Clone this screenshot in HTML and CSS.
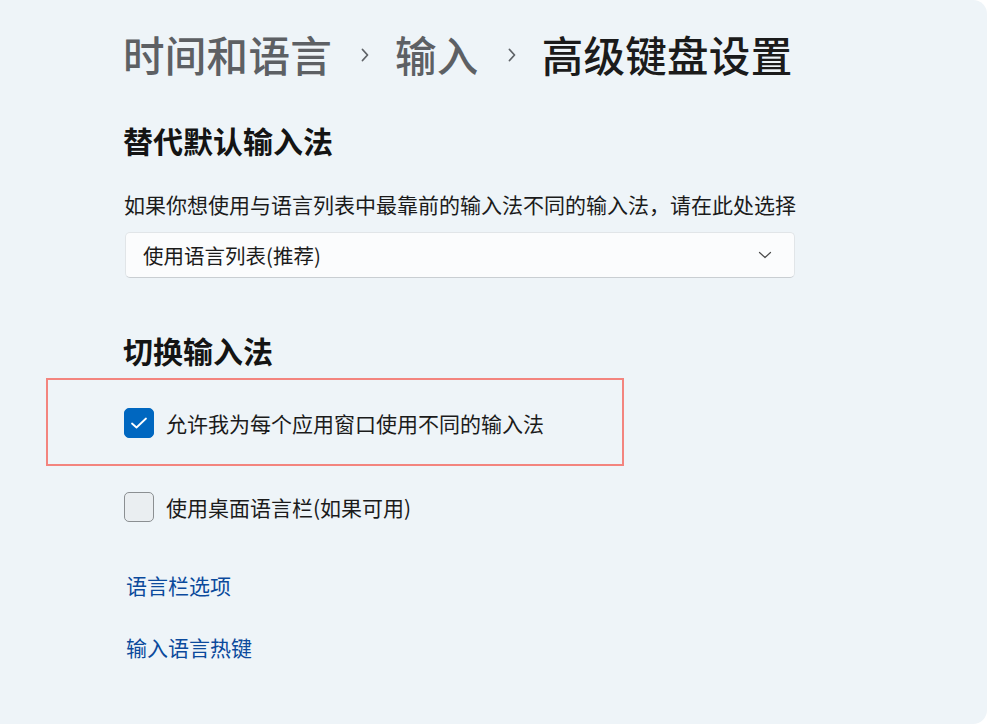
FILE: index.html
```html
<!DOCTYPE html>
<html lang="zh-CN">
<head>
<meta charset="utf-8">
<title>高级键盘设置</title>
<link rel="stylesheet" href="styles.css">
</head>
<body>
<div class="window">
  <nav class="crumbs">
    <span class="crumb">时间和语言</span>
    <svg class="sep" width="12" height="16" viewBox="0 0 12 16"><path d="M3.5 2.5 L8.5 8 L3.5 13.5" fill="none" stroke="#5f6368" stroke-width="1.8" stroke-linecap="round" stroke-linejoin="round"/></svg>
    <span class="crumb">输入</span>
    <svg class="sep" width="12" height="16" viewBox="0 0 12 16"><path d="M3.5 2.5 L8.5 8 L3.5 13.5" fill="none" stroke="#5f6368" stroke-width="1.8" stroke-linecap="round" stroke-linejoin="round"/></svg>
    <span class="crumb current">高级键盘设置</span>
  </nav>

  <h2 class="section-title first">替代默认输入法</h2>
  <p class="desc">如果你想使用与语言列表中最靠前的输入法不同的输入法，请在此处选择</p>
  <div class="select">
    <span>使用语言列表(推荐)</span>
    <svg width="14" height="8" viewBox="0 0 14 8"><path d="M1.5 1.5 L7 6.5 L12.5 1.5" fill="none" stroke="#4a4a4a" stroke-width="1.2" stroke-linecap="round" stroke-linejoin="round"/></svg>
  </div>

  <h2 class="section-title second">切换输入法</h2>
  <label class="check-row row-one">
    <span class="box checked">
      <svg width="18" height="14" viewBox="0 0 18 14"><path d="M2 7.5 L6.5 11.5 L16 2.5" fill="none" stroke="#fff" stroke-width="1.8" stroke-linecap="round" stroke-linejoin="round"/></svg>
    </span>
    <span>允许我为每个应用窗口使用不同的输入法</span>
  </label>
  <label class="check-row row-two">
    <span class="box"></span>
    <span>使用桌面语言栏(如果可用)</span>
  </label>

  <a class="link link-one" href="#">语言栏选项</a>
  <a class="link link-two" href="#">输入语言热键</a>

  <div class="highlight"></div>
</div>
</body>
</html>
```

FILE: styles.css
```css
html, body {
  margin: 0;
  padding: 0;
  background: #ffffff;
}

body {
  font-family: "Noto Sans CJK SC", "Noto Sans", sans-serif;
  color: #1b1b1b;
}

.window {
  position: relative;
  box-sizing: border-box;
  width: 987px;
  height: 724px;
  background: #eef4f8;
  border-radius: 0 14px 14px 0;
  padding: 26px 0 0 123px;
  overflow: hidden;
}

.crumbs {
  display: flex;
  align-items: center;
  height: 56px;
}

.crumb {
  font-size: 41.5px;
  font-weight: 500;
  line-height: 56px;
  color: #5d6064;
  letter-spacing: 0.3px;
}

.crumb.current {
  color: #1b1b1b;
}

.sep {
  margin: 2px 24px 0 27px;
}

.section-title {
  margin: 0;
  font-size: 30px;
  font-weight: 600;
  line-height: 40px;
  color: #141414;
}

.section-title.first {
  margin-top: 38px;
}

.section-title.second {
  margin-top: 52px;
}

.desc {
  margin: 29px 0 0 1px;
  font-size: 21px;
  line-height: 30px;
  color: #1b1b1b;
}

.select {
  box-sizing: border-box;
  width: 670px;
  height: 46px;
  margin: 13px 0 0 2px;
  display: flex;
  align-items: center;
  justify-content: space-between;
  padding: 0 22px 0 17px;
  background: #fbfcfd;
  border: 1px solid #e1e5e8;
  border-bottom-color: #c9ced2;
  border-radius: 5px;
  font-size: 20.5px;
  color: #1b1b1b;
}

.check-row {
  display: flex;
  align-items: center;
  gap: 12px;
  height: 30px;
  font-size: 21px;
  line-height: 30px;
  margin-left: 1px;
  color: #1b1b1b;
}

.row-one {
  margin-top: 38px;
}

.row-two {
  margin-top: 54px;
}

.box {
  box-sizing: border-box;
  width: 30px;
  height: 30px;
  border-radius: 5px;
  border: 1.5px solid #8b8f92;
  background: #eaeef1;
  display: flex;
  align-items: center;
  justify-content: center;
}

.box.checked {
  background: #0067c0;
  border-color: #0067c0;
}

.link {
  display: block;
  width: max-content;
  margin-left: 3px;
  font-size: 21px;
  line-height: 30px;
  color: #0b4a9c;
  text-decoration: none;
}

.link-one {
  margin-top: 48px;
}

.link-two {
  margin-top: 32px;
}

.highlight {
  position: absolute;
  left: 46px;
  top: 378px;
  width: 578px;
  height: 88px;
  box-sizing: border-box;
  border: 2px solid #f3847e;
  pointer-events: none;
}
```
